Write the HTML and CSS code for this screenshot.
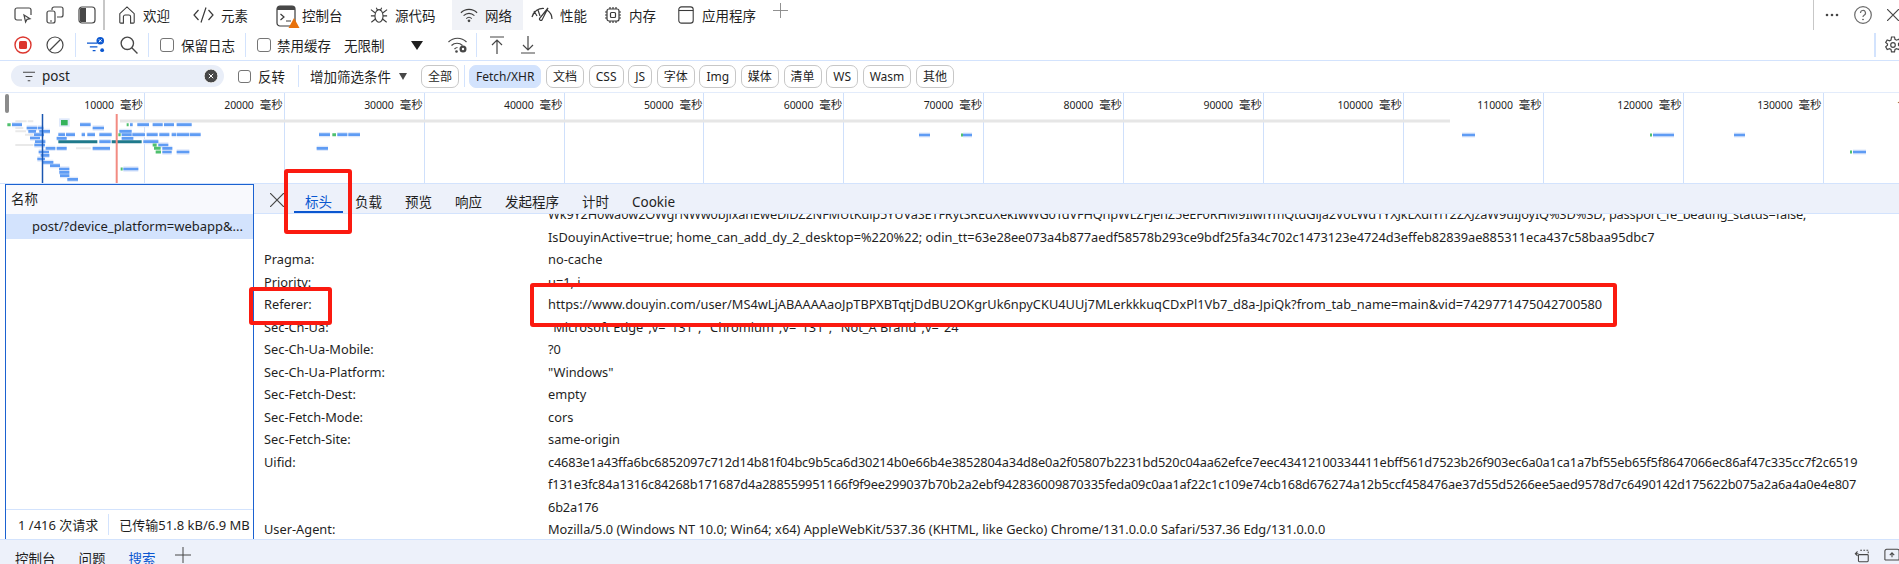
FILE: index.html
```html
<!DOCTYPE html>
<html lang="zh-CN">
<head>
<meta charset="utf-8">
<title>DevTools</title>
<link rel="stylesheet" href="styles.css">
</head>
<body>
<div class="devtools">
  <header class="topbar">
    <div class="dock-icons">
      <svg class="ic" viewBox="0 0 18 18"><path d="M8 14H3a2 2 0 0 1-2-2V4a2 2 0 0 1 2-2h12a2 2 0 0 1 2 2v5"/><path class="thin" d="M10 9l1.600 7 1.400-2.600 3-.6z"/></svg>
      <svg class="ic" viewBox="0 0 18 18"><path d="M6 4V3a2 2 0 0 1 2-2h7a2 2 0 0 1 2 2v6a2 2 0 0 1-2 2h-4"/><rect x="1" y="5" width="8" height="12" rx="2"/><path d="M4 15h2"/></svg>
      <svg class="ic" viewBox="0 0 18 18"><rect x="1" y="1" width="16" height="16" rx="3"/><path class="fill" d="M3 2h5v14H3a1 1 0 0 1-1-1V3a1 1 0 0 1 1-1z"/></svg>
    </div>
    <div class="vsep tall"></div>
    <nav class="main-tabs">
      <div class="main-tab"><svg class="ic" viewBox="0 0 18 20"><path d="M1 18V8.500L9 1l8 7.500V18a1 1 0 0 1-1 1h-3v-7a2 2 0 0 0-2-2H7a2 2 0 0 0-2 2v7H2a1 1 0 0 1-1-1z"/></svg><span>欢迎</span></div>
      <div class="main-tab"><svg class="ic code" viewBox="0 0 21 18"><path d="M5.500 4L1 9l4.500 5M13 1.500L8 16.500M15.500 4L20 9l-4.500 5"/></svg><span>元素</span></div>
      <div class="main-tab console-tab"><svg class="ic wide console-ic" viewBox="0 0 24 24"><rect x="1" y="1" width="18" height="20" rx="3"/><path class="fill" d="M1 4a3 3 0 0 1 3-3h12a3 3 0 0 1 3 3v1H1z"/><path d="M4.500 9l3.500 3-3.500 3M10 16h5"/><path class="warn" d="M18 13l5.500 10h-11z"/></svg><span>控制台</span></div>
      <div class="main-tab"><svg class="ic" viewBox="0 0 20 20"><ellipse cx="10" cy="11" rx="4.500" ry="7"/><path d="M7 2l1.500 3M13 2l-1.500 3M1 4l4.500 3.500M19 4l-4.500 3.500M1 11h4.500M19 11h-4.500M1.500 18l4.500-3.500M18.500 18L14 14.500"/></svg><span>源代码</span></div>
      <div class="main-tab active"><svg class="ic" viewBox="0 0 20 18"><path d="M1 6.500c5-5 13-5 18 0M4 9.800c3.500-3.500 8.500-3.500 12 0M7 13c1.800-1.800 4.200-1.800 6 0"/><circle class="fill" cx="10" cy="15.500" r="1.500"/></svg><span>网络</span></div>
      <div class="main-tab"><svg class="ic wide" viewBox="0 0 22 18"><path d="M1 11C2.500 5 8 2 13 2.500M16 4c3 2 5 5 5 9M7 4l2 6M3 5l3 5"/><path d="M17 2l-6 12a1.500 1.500 0 0 1-2.500-1.500z"/></svg><span>性能</span></div>
      <div class="main-tab"><svg class="ic" viewBox="0 0 18 18"><rect x="3" y="3" width="12" height="12" rx="2"/><rect x="6.500" y="6.500" width="5" height="5" rx="1"/><path d="M6 1v2M9 1v2M12 1v2M6 15v2M9 15v2M12 15v2M1 6h2M1 9h2M1 12h2M15 6h2M15 9h2M15 12h2"/></svg><span>内存</span></div>
      <div class="main-tab"><svg class="ic" viewBox="0 0 18 20"><rect x="1" y="1" width="16" height="18" rx="3"/><path d="M1 5h16"/></svg><span>应用程序</span></div>
      <svg class="plus" viewBox="0 0 16 16"><path d="M8 0v16M0 8h16"/></svg>
    </nav>
    <div class="top-right">
      <div class="vsep"></div>
      <svg class="more" viewBox="0 0 14 4"><circle cx="2" cy="2" r="1.300"/><circle cx="7" cy="2" r="1.300"/><circle cx="12" cy="2" r="1.300"/></svg>
      <svg class="help" viewBox="0 0 18 18"><circle cx="9" cy="9" r="8.300"/><path d="M6.500 7a2.500 2.500 0 1 1 3.600 2.200C9.300 9.700 9 10.200 9 11"/><circle class="fill" cx="9" cy="13.500" r=".8"/></svg>
      <svg class="close-main" viewBox="0 0 12 12"><path d="M0 0l12 12M12 0L0 12"/></svg>
    </div>
  </header>

  <div class="toolbar">
    <svg class="ic" viewBox="0 0 18 18"><circle class="rec" cx="9" cy="9" r="8"/><rect class="rec-dot" x="5" y="5" width="8" height="8" rx="1.500"/></svg>
    <svg class="ic" viewBox="0 0 18 18"><circle cx="9" cy="9" r="8"/><path d="M3.500 14.500l11-11"/></svg>
    <div class="vsep soft"></div>
    <svg class="ic filter-on" viewBox="0 0 19 18"><path class="blue-line" d="M0 7h11M3 11h8M6 15h3"/><circle class="blue" cx="14" cy="4.500" r="4"/><path class="white-line" d="M12.500 3l3 3M15.500 3l-3 3"/><circle class="blue" cx="16" cy="14.500" r="2"/></svg>
    <svg class="ic" viewBox="0 0 16 16"><circle cx="6.500" cy="6.500" r="5.500"/><path d="M10.500 10.500L15.500 15.500"/></svg>
    <div class="vsep soft"></div>
    <span class="check"></span><span class="lbl">保留日志</span>
    <div class="vsep soft"></div>
    <span class="check"></span><span class="lbl">禁用缓存</span>
    <span class="lbl">无限制</span>
    <span class="tri big"></span>
    <svg class="ic wide" viewBox="0 0 21 18"><path d="M1 6c5-5 13-5 18 0M4 9.500c3-3 8-3 11 0M7 13c1-1 2-1.500 3-1.500"/><circle class="fill" cx="9" cy="15.500" r="1.300"/><circle class="fill" cx="15.500" cy="13" r="3.500"/><circle class="hole" cx="15.500" cy="13" r="1.200"/></svg>
    <div class="vsep soft"></div>
    <svg class="ic arrow" viewBox="0 0 14 18"><path d="M0 1h14M7 18V4M2 9l5-5 5 5"/></svg>
    <svg class="ic arrow" viewBox="0 0 14 18"><path d="M0 17h14M7 0v14M2 9l5 5 5-5"/></svg>
    <span></span>
    <div class="vsep soft thick"></div>
    <svg class="ic gear" viewBox="0 0 18 18"><path d="M7.500 1h3l.5 2.400 1.500.8 2.300-.9 1.500 2.600-1.800 1.600v1.800l1.800 1.600-1.500 2.600-2.300-.9-1.500.8-.5 2.400h-3L7 13.400l-1.500-.8-2.300.9-1.500-2.600 1.800-1.600V8.100L1.700 6.500l1.500-2.600 2.300.9L7 4z"/><circle cx="9" cy="9" r="2.300"/></svg>
  </div>

  <div class="filterbar">
    <div class="search">
      <svg class="funnel" viewBox="0 0 14 12"><path d="M0 1h14M3 6h8M5.500 11h3"/></svg>
      <span class="search-text">post</span>
      <span class="clear"><svg viewBox="0 0 14 14"><circle cx="7" cy="7" r="7"/><path d="M4.800 4.800l4.400 4.400M9.200 4.800L4.800 9.200"/></svg></span>
    </div>
    <span class="check small"></span><span class="lbl">反转</span>
    <div class="vsep soft"></div>
    <span class="lbl">增加筛选条件</span>
    <span class="tri"></span>
    <button class="chip">全部</button>
    <div class="vsep soft"></div>
    <div class="chips">
      <button class="chip on">Fetch/XHR</button>
      <button class="chip">文档</button>
      <button class="chip">CSS</button>
      <button class="chip">JS</button>
      <button class="chip">字体</button>
      <button class="chip">Img</button>
      <button class="chip">媒体</button>
      <button class="chip">清单</button>
      <button class="chip">WS</button>
      <button class="chip">Wasm</button>
      <button class="chip">其他</button>
    </div>
  </div>

  <section class="overview">
    <div class="ticks">
      <span>10000<i>毫秒</i></span><span>20000<i>毫秒</i></span><span>30000<i>毫秒</i></span><span>40000<i>毫秒</i></span><span>50000<i>毫秒</i></span><span>60000<i>毫秒</i></span><span>70000<i>毫秒</i></span><span>80000<i>毫秒</i></span><span>90000<i>毫秒</i></span><span>100000<i>毫秒</i></span><span>110000<i>毫秒</i></span><span>120000<i>毫秒</i></span><span>130000<i>毫秒</i></span><span>140000<i>毫秒</i></span>
    </div>
    <span class="handle"></span>
    <svg class="chart" viewBox="0 0 1899 91">
      <defs>
        <path id="blue-bars" d="M36 74H66M240 74H272M278 84H312M412 74H447M458 74H488M492 74H522M530 74H575M390 74H398M80 84H112M114 84H130M85 94H108M118 94H150M102 104H132M90 114H120M105 125H136M103 135H135M137 145H166M170 145H200M116 156H147M122 166H148M112 177H135M128 187H160M150 197H180M177 207H208M178 217H208M180 227H208M202 238H234M175 104H195M198 104H225M245 104H255M262 104H285M298 104H335M365 104H395M397 104H435M440 104H473M478 104H508M515 104H528M530 104H568M570 104H602M298 125H332M430 125H475M170 115H200M365 115H400M358 94H395M278 145H330M475 135H505M487 145H517M487 156H515M530 156H568M370 207H415M957 104H990M1012 104H1042M1045 104H1080M950 145H984"/>
        <path id="blue-far" d="M919 42H930M963 42H972M1462 42H1475M1653 42H1674M1734 42H1745M1853 59H1866"/>
      </defs>
      <path class="track" d="M120 28H1450"/>
      <g class="zone">
        <path class="ghost" d="M46 64H80M83 64H100M46 84H70M46 94H78M46 135H100M228 145H272M75 104H100"/>
        <use class="halo" href="#blue-bars"/>
        <use class="bar" href="#blue-bars"/>
        <rect class="halo-box" x="177" y="55" width="32" height="25"/>
        <rect class="green-box" x="183" y="60" width="20" height="16"/>
        <path class="green" d="M22 74H32M380 74H386M355 104H362M458 135H470M462 145H482M467 156H483M362 207H368M997 104H1008"/>
        <path class="teal" d="M175 125H292M335 125H425"/>
      </g>
      <use class="halo-far" href="#blue-far"/>
      <use class="bar-far" href="#blue-far"/>
      <path class="green-far" d="M961 42H963M1650 42H1652M1850 59H1852"/>
      <path class="dom-line" d="M42.500 21V91"/>
      <path class="load-line" d="M116.700 21V91"/>
    </svg>
  </section>

  <main class="split">
    <aside class="requests">
      <div class="req-head">名称</div>
      <div class="req-row">post/?device_platform=webapp&amp;...</div>
      <div class="req-space"></div>
      <footer class="req-foot">
        <span>1 /416 次请求</span>
        <span class="foot-sep"></span>
        <span>已传输51.8 kB/6.9 MB</span>
      </footer>
    </aside>
    <section class="detail">
      <div class="detail-tabs">
        <svg class="detail-close" viewBox="0 0 14 14"><path d="M0 0l14 14M14 0L0 14"/></svg>
        <div class="dtab current">标头</div>
        <div class="dtab">负载</div>
        <div class="dtab">预览</div>
        <div class="dtab">响应</div>
        <div class="dtab">发起程序</div>
        <div class="dtab">计时</div>
        <div class="dtab">Cookie</div>
      </div>
      <div class="headers-clip">
        <dl class="headers">
          <dt></dt><dd><span class="hash">Wk9Y2H0wa0w2OWgrNWw0bjlxanEweDlDZ2NFMUtKdlp5YUVaSETFRytSREdXekIwWG0TdVFHQnpWLZFjenZ5eEF0RHM9IiwiYmQtdGlja2V0LWd1YXJkLXdlYi12ZXJzaW9uIjoyIQ%3D%3D; passport_fe_beating_status=false;</span><br>IsDouyinActive=true; home_can_add_dy_2_desktop=%220%22; odin_tt=<span class="hash-soft">63e28ee073a4b877aedf58578b293ce9bdf25fa34c702c1473123e4724d3effeb82839ae885311eca437c58baa95dbc7</span></dd>
          <dt>Pragma:</dt><dd>no-cache</dd>
          <dt>Priority:</dt><dd>u=1, i</dd>
          <dt>Referer:</dt><dd>https://www.douyin.com/user/MS4wLjABAAAAaoJpTBPXBTqtjDdBU2OKgrUk6npyCKU4UUj7MLerkkkuqCDxPl1Vb7_d8a-JpiQk?from_tab_name=main&amp;vid=7429771475042700580</dd>
          <dt>Sec-Ch-Ua:</dt><dd>"Microsoft Edge";v="131", "Chromium";v="131", "Not_A Brand";v="24"</dd>
          <dt>Sec-Ch-Ua-Mobile:</dt><dd>?0</dd>
          <dt>Sec-Ch-Ua-Platform:</dt><dd>"Windows"</dd>
          <dt>Sec-Fetch-Dest:</dt><dd>empty</dd>
          <dt>Sec-Fetch-Mode:</dt><dd>cors</dd>
          <dt>Sec-Fetch-Site:</dt><dd>same-origin</dd>
          <dt>Uifid:</dt><dd><span class="hash">c4683e1a43ffa6bc6852097c712d14b81f04bc9b5ca6d30214b0e66b4e3852804a34d8e0a2f05807b2231bd520c04aa62efce7eec43412100334411ebff561d7523b26f903ec6a0a1ca1a7bf55eb65f5f8647066ec86af47c335cc7f2c6519<br>f131e3fc84a1316c84268b171687d4a288559951166f9f9ee299037b70b2a2ebf942836009870335feda09c0aa1af22c1c109e74cb168d676274a12b5ccf458476ae37d55d5266ee5aed9578d7c6490142d175622b075a2a6a4a0e4e807<br>6b2a176</span></dd>
          <dt>User-Agent:</dt><dd>Mozilla/5.0 (Windows NT 10.0; Win64; x64) AppleWebKit/537.36 (KHTML, like Gecko) Chrome/131.0.0.0 Safari/537.36 Edg/131.0.0.0</dd>
        </dl>
      </div>
    </section>
  </main>

  <footer class="drawer">
    <span class="dr-tab">控制台</span>
    <span class="dr-tab">问题</span>
    <span class="dr-tab current">搜索</span>
    <svg class="plus dark" viewBox="0 0 16 16"><path d="M8 0v16M0 8h16"/></svg>
    <span class="dr-space"></span>
    <svg class="ic dr-ic" viewBox="0 0 18 16"><path d="M5 6H2.500M4 3.500L1.500 6 4 8.500"/><rect x="5" y="7" width="11" height="8" rx="1"/><path class="dash" d="M7 2h9v5"/></svg>
    <svg class="ic dr-ic" viewBox="0 0 18 16"><path d="M1 13V3a2 2 0 0 1 2-2h12a2 2 0 0 1 2 2v10M1 13h16M9 10V5M6.500 7.500L9 5l2.500 2.500"/></svg>
  </footer>

  <div class="mark mark-tab"></div>
  <div class="mark mark-name"></div>
  <div class="mark mark-value"></div>
</div>
</body>
</html>
```

FILE: styles.css
```css
* { box-sizing: border-box; }
html, body { margin: 0; padding: 0; background: #fff; }
body { width: 1899px; height: 564px; overflow: hidden; }
.devtools {
  position: relative;
  width: 1899px;
  height: 564px;
  overflow: hidden;
  display: flex;
  flex-direction: column;
  color: #1f1f1f;
  font-family: "Noto Sans", "Noto Sans CJK SC", sans-serif;
  font-size: 13.5px;
}
svg { display: block; fill: none; stroke: #474747; stroke-width: 1.2; flex: none; }
.ic { width: 18px; height: 18px; }
.ic.wide { width: 22px; height: 18px; }
.ic.console-ic { width: 24px; height: 24px; margin-top: 3px; }
.ic.code { width: 21px; }
.ic.arrow { width: 14px; }
.ic.gear { margin-left: -1px; }
.ic .fill, .help .fill { fill: #474747; stroke: none; }
.vsep { width: 1px; height: 24px; background: #d3e3fd; justify-self: start; }
.vsep.tall { width: 2px; height: 30px; background: #c7c7c7; }
.vsep.thick { width: 2px; }

/* top bar */
.topbar {
  height: 30px;
  display: flex;
  align-items: center;
  padding-left: 14px;
  flex: none;
}
.dock-icons { display: flex; gap: 14px; width: 89px; align-items: center; }
.dock-icons .ic { width: 18px; }
.topbar .vsep.tall { align-self: flex-start; margin-right: 5px; }
.main-tabs {
  display: grid;
  grid-template-columns: 75px 83px 94px 90px 71px 73px 73px 96px auto;
  align-items: center;
  height: 30px;
}
.main-tab {
  display: flex;
  align-items: center;
  gap: 7px;
  height: 30px;
  padding-left: 8px;
  font-size: 13.5px;
  white-space: nowrap;
}
.main-tab.active { background: #f0f2f7; }
.main-tab .ic { stroke: #3a3a3a; }
.main-tab .warn { fill: #e8710a; stroke: none; }
.console-tab { gap: 2px; }
.plus { width: 15px; height: 15px; margin: 0 0 10px 8px; stroke: #8a8a8a; stroke-width: 1; }
.plus.dark { stroke: #474747; width: 16px; height: 16px; }
.top-right {
  margin-left: auto;
  display: flex;
  align-items: center;
  height: 30px;
}
.top-right .vsep { width: 1px; height: 30px; background: #c7c7c7; align-self: flex-start; margin-right: 11px; }
.more { width: 14px; height: 4px; fill: #474747; stroke: none; margin-right: 15px; }
.help { width: 18px; height: 18px; margin-right: 15px; stroke: #6a6a6a; }
.close-main { width: 12px; height: 12px; stroke: #474747; }

/* network toolbar */
.toolbar {
  height: 31px;
  flex: none;
  display: grid;
  grid-template-columns: 32px 29px 12px 33px 28px 12px 21px 64px 12px 20px 67px 67px 36px 29px 14px 31px 14px 1fr 11px 14px;
  align-items: center;
  padding-left: 14px;
  border-bottom: 1px solid #d3e3fd;
}
.rec { stroke: #dc362e; stroke-width: 1.4; fill: none; }
.rec-dot { fill: #dc362e; stroke: none; }
.blue { fill: #0b57d0; stroke: none; }
.blue-line { stroke: #0b57d0; stroke-width: 1.4; }
.white-line { stroke: #fff; stroke-width: 1; }
.ic .hole { fill: #fff; stroke: none; }
.check {
  display: block;
  width: 14px;
  height: 14px;
  border: 1px solid #757575;
  border-radius: 3px;
}
.check.small { width: 13px; height: 13px; }
.lbl { white-space: nowrap; font-size: 13.5px; }
.tri {
  display: block;
  width: 0;
  height: 0;
  border-left: 4.5px solid transparent;
  border-right: 4.5px solid transparent;
  border-top: 7px solid #474747;
}
.tri.big { border-left-width: 6px; border-right-width: 6px; border-top: 9px solid #1f1f1f; }

/* filter bar */
.filterbar {
  height: 30px;
  flex: none;
  display: flex;
  align-items: center;
  padding-left: 11px;
}
.search {
  width: 213px;
  height: 22px;
  border-radius: 11px;
  background: #e9eef8;
  display: flex;
  align-items: center;
  padding: 0 6px 0 12px;
  margin-right: 14px;
}
.funnel { width: 12px; height: 11px; stroke-width: 1.3; }
.search-text { margin-left: 7px; font-size: 13.5px; flex: 1; }
.clear svg { width: 14px; height: 14px; fill: #474747; stroke: #fff; stroke-width: 1; }
.filterbar .check { margin-right: 7px; }
.filterbar .vsep { height: 22px; margin: 0 11px 0 13px; }
.filterbar .tri { margin: 0 14px 0 8px; }
.filterbar .chip + .vsep { margin: 0 4px 0 5px; }
.chips { display: flex; gap: 4.7px; }
.chip {
  height: 23px;
  padding: 0 6px;
  border: 1px solid #c7c7c7;
  border-radius: 7px;
  background: #fff;
  color: #1f1f1f;
  font: inherit;
  font-size: 12px;
  line-height: 21px;
  white-space: nowrap;
}
.chip.on { background: #d3e3fd; border-color: #d3e3fd; }

/* overview */
.overview {
  position: relative;
  margin-top: 1px;
  height: 91px;
  flex: none;
  padding-left: 5px;
  overflow: hidden;
  border-top: 1px solid #e3ecfb;
}
.ticks { display: flex; height: 100%; width: 2000px; }
.ticks span {
  width: 139.9px;
  flex: none;
  border-right: 1px solid #cfe0fb;
  text-align: right;
  padding: 3px 1px 0 0;
  font-size: 10.5px;
  letter-spacing: -.1px;
  line-height: 18px;
  white-space: nowrap;
}
.ticks i { font-style: normal; font-size: 11.5px; margin-left: 6px; letter-spacing: 0; }
.handle { position: absolute; left: 5px; top: 1px; width: 4px; height: 19px; border-radius: 2px; background: #8b8b8b; }
.chart { position: absolute; left: 0; top: 0; width: 1899px; height: 91px; stroke: none; }
.track { stroke: #e6e6e6; stroke-width: 3; }
.zone { transform: translate(0, 7px) scale(.33333); }
.ghost { stroke: #e9e9e9; stroke-width: 6; }
.halo { stroke: #dfe9fb; stroke-width: 16; }
.bar { stroke: #5f9cf4; stroke-width: 8; }
.halo-box { fill: #dfe9fb; }
.green-box { fill: #35b35c; }
.green { stroke: #4fc06e; stroke-width: 9; }
.teal { stroke: #1f7a8c; stroke-width: 9; }
.halo-far { stroke: #dfe9fb; stroke-width: 5; }
.bar-far { stroke: #5f9cf4; stroke-width: 2.700; }
.green-far { stroke: #4fc06e; stroke-width: 3; }
.dom-line { stroke: #1a56b0; stroke-width: 1.5; }
.load-line { stroke: #f28b82; stroke-width: 2; }

/* split */
.split {
  height: 357px;
  flex: none;
  display: flex;
  padding-left: 5px;
  border-top: 1px solid #d3e3fd;
}
.requests {
  width: 249px;
  flex: none;
  display: flex;
  flex-direction: column;
  border: 1.5px solid #1b62d1;
  border-top-width: 1px;
}
.req-head {
  height: 29px;
  flex: none;
  background: #f8f9fd;
  padding-left: 5px;
  line-height: 28px;
  font-size: 13.5px;
}
.req-row {
  height: 25px;
  flex: none;
  padding-left: 26px;
  background: #d3e3fd;
  line-height: 25px;
  font-size: 13px;
  white-space: nowrap;
  overflow: hidden;
}
.req-space { flex: 1; }
.req-foot {
  height: 30px;
  flex: none;
  display: flex;
  align-items: center;
  border-top: 1px solid #d3e3fd;
  padding-left: 12px;
  font-size: 13px;
  white-space: nowrap;
}
.foot-sep { width: 1px; height: 21px; background: #d3e3fd; margin: 0 10px; }
.detail { flex: 1; min-width: 0; display: flex; flex-direction: column; }
.detail-tabs {
  height: 30px;
  flex: none;
  display: flex;
  align-items: stretch;
  gap: 1px;
  background: #edf1fa;
  border-bottom: 1px solid #d3e3fd;
  padding-left: 16px;
}
.detail-close { width: 14px; height: 14px; margin: 9px 9px 0 0; }
.dtab {
  padding: 8px 11px 0;
  font-size: 13.5px;
  line-height: 20px;
  white-space: nowrap;
}
.dtab.current { color: #0b57d0; border-bottom: 2px solid #0b57d0; }
.headers-clip { flex: 1; overflow: hidden; }
.headers {
  display: grid;
  grid-template-columns: 284px 1fr;
  margin: -11px 0 0;
  padding-left: 10px;
  font-size: 12.8px;
  line-height: 22.5px;
  white-space: nowrap;
}
.headers dd { margin: 0; }
.hash { letter-spacing: -.17px; }
.hash-soft { letter-spacing: -.05px; }

/* drawer */
.drawer {
  flex: 1;
  display: flex;
  align-items: flex-start;
  background: #edf1fa;
  border-top: 1px solid #d3e3fd;
  padding-left: 15px;
  font-size: 13.5px;
  line-height: 38px;
  overflow: hidden;
  margin-top: -1px;
}
.dr-tab { margin-right: 23px; white-space: nowrap; height: 24px; }
.dr-tab.current { color: #0b57d0; }
.drawer .plus { margin: 7px 0 0 -4px; }
.dr-space { flex: 1; }
.dr-ic { width: 16px; height: 15px; margin: 8px 0 0 14px; }
.dr-ic:last-child { margin-right: -1px; }
.dash { stroke-dasharray: 2 1.500; }

/* annotations */
.mark { position: absolute; border: 4px solid #fb1a10; border-radius: 3px; }
.mark-tab { left: 284px; top: 169px; width: 68px; height: 65px; }
.mark-name { left: 249px; top: 287px; width: 83px; height: 38px; }
.mark-value { left: 530px; top: 283px; width: 1087px; height: 44px; }
```
